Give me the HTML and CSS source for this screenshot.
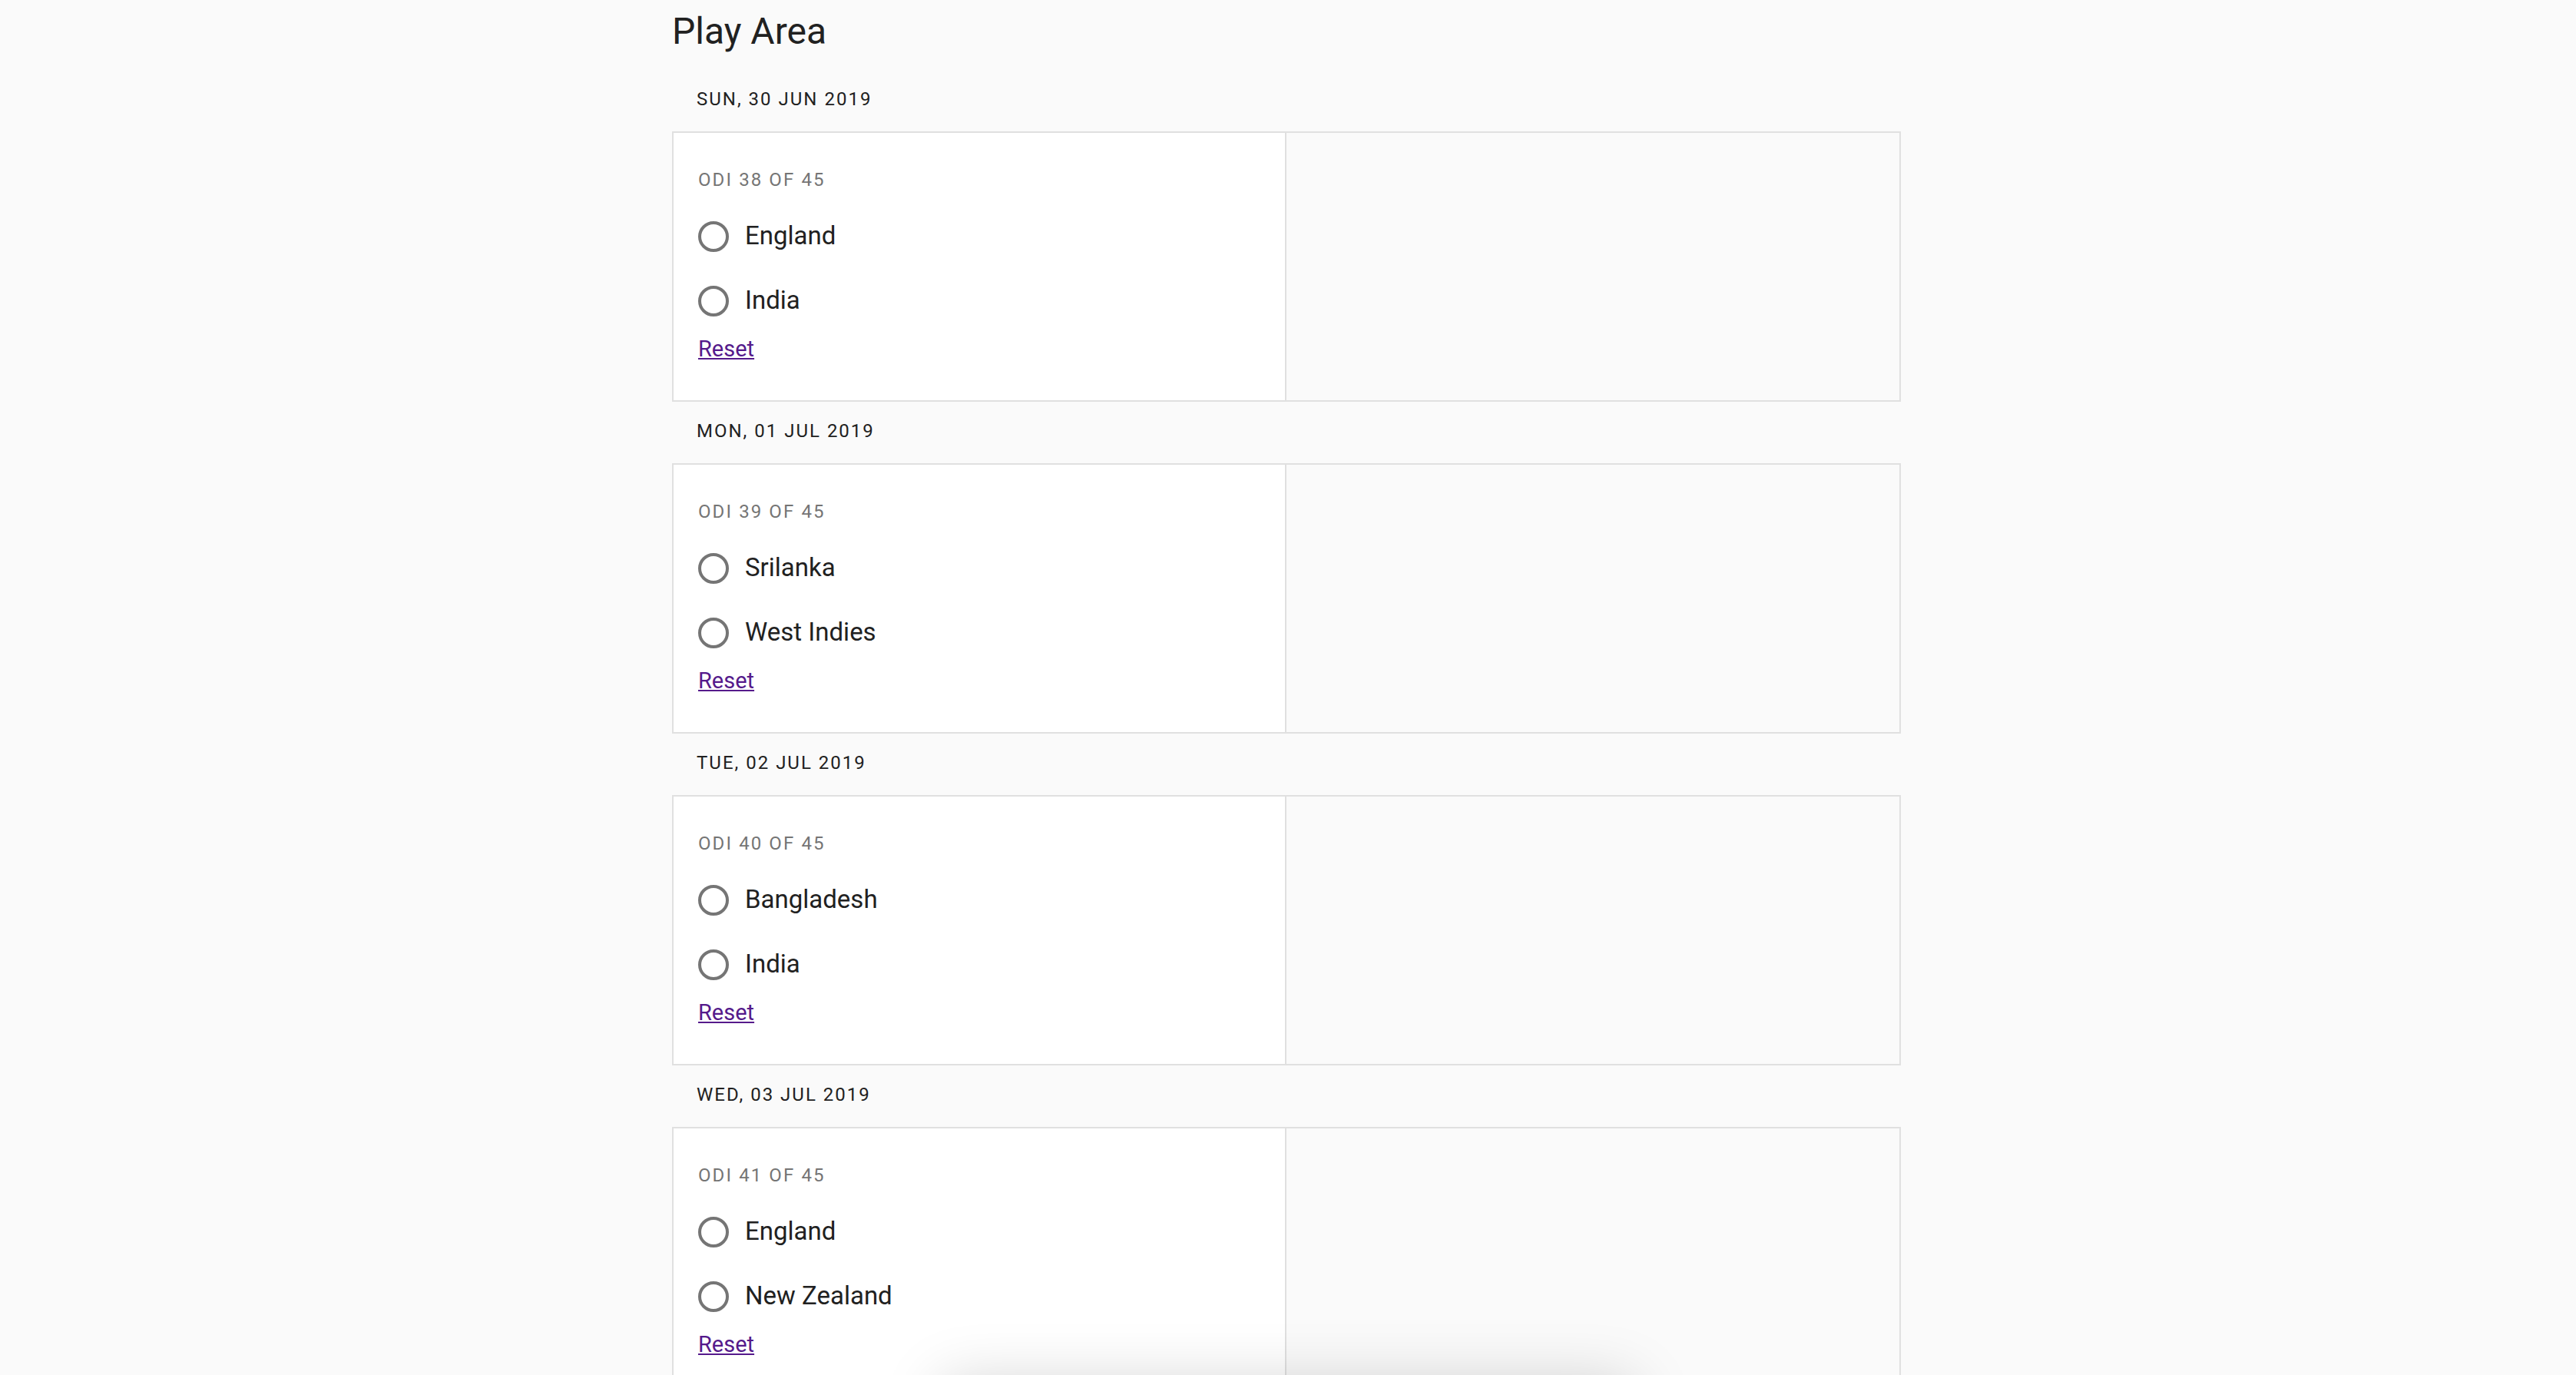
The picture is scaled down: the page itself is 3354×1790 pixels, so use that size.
FILE: index.html
```html
<!DOCTYPE html>
<html lang="en">
<head>
  <meta charset="UTF-8">
  <meta name="viewport" content="width=device-width, initial-scale=1.0">
  <title>Play Area</title>
  <link rel="stylesheet" href="styles.css">
</head>
<body>
  <main class="play">
    <h1 class="play-title">Play Area</h1>

    <!-- 30 Jun -->
    <section class="day">
      <div class="day-date">SUN, 30 JUN 2019</div>
      <div class="match">
        <div class="match-pick">
          <div class="match-no">ODI 38 OF 45</div>
          <label class="team"><input type="radio" name="odi38"><span>England</span></label>
          <label class="team"><input type="radio" name="odi38"><span>India</span></label>
          <a href="#" class="reset">Reset</a>
        </div>
        <div class="match-side"></div>
      </div>
    </section>

    <!-- 01 Jul -->
    <section class="day">
      <div class="day-date">MON, 01 JUL 2019</div>
      <div class="match">
        <div class="match-pick">
          <div class="match-no">ODI 39 OF 45</div>
          <label class="team"><input type="radio" name="odi39"><span>Srilanka</span></label>
          <label class="team"><input type="radio" name="odi39"><span>West Indies</span></label>
          <a href="#" class="reset">Reset</a>
        </div>
        <div class="match-side"></div>
      </div>
    </section>

    <!-- 02 Jul -->
    <section class="day">
      <div class="day-date">TUE, 02 JUL 2019</div>
      <div class="match">
        <div class="match-pick">
          <div class="match-no">ODI 40 OF 45</div>
          <label class="team"><input type="radio" name="odi40"><span>Bangladesh</span></label>
          <label class="team"><input type="radio" name="odi40"><span>India</span></label>
          <a href="#" class="reset">Reset</a>
        </div>
        <div class="match-side"></div>
      </div>
    </section>

    <!-- 03 Jul -->
    <section class="day">
      <div class="day-date">WED, 03 JUL 2019</div>
      <div class="match">
        <div class="match-pick">
          <div class="match-no">ODI 41 OF 45</div>
          <label class="team"><input type="radio" name="odi41"><span>England</span></label>
          <label class="team"><input type="radio" name="odi41"><span>New Zealand</span></label>
          <a href="#" class="reset">Reset</a>
        </div>
        <div class="match-side"></div>
      </div>
    </section>
  </main>

  <div class="bottom-sheet"></div>
</body>
</html>
```

FILE: styles.css
```css
body {
  margin: 0;
  background-color: #fafafa;
  font-family: Roboto, "Liberation Sans", Arial, sans-serif;
  color: rgba(0, 0, 0, 0.87);
}
.play {
  width: 1600px;
  margin-left: calc(50% - 802px);
}
.play-title {
  margin: 0;
  padding: 13px 0 22px;
  font-size: 48px;
  font-weight: 400;
  line-height: 56px;
  color: #212121;
}
.day-date {
  padding: 22px 32px 26px;
  font-size: 24px;
  line-height: 32px;
  letter-spacing: 2px;
  color: #212121;
}
.match {
  display: grid;
  grid-template-columns: 1fr 1fr;
  border: 2px solid #e0e0e0;
}
.match-pick {
  display: flex;
  flex-direction: column;
  align-items: flex-start;
  padding: 45px 32px 47px;
  background-color: #fff;
  border-right: 2px solid #e0e0e0;
}
.match-no {
  margin-bottom: 16px;
  font-size: 24px;
  line-height: 32px;
  letter-spacing: 2.1px;
  color: #757575;
}
.team {
  display: flex;
  align-items: center;
  gap: 21px;
  height: 84px;
  font-size: 33px;
  color: #212121;
  cursor: pointer;
}
.team span {
  padding-bottom: 3px;
}
.team input {
  appearance: none;
  -webkit-appearance: none;
  width: 40px;
  height: 40px;
  margin: 0;
  border: 4px solid #757575;
  border-radius: 50%;
  cursor: pointer;
}
.team input:checked {
  border-color: #673ab7;
  background: radial-gradient(circle, #673ab7 0 9px, transparent 10px);
}
.reset {
  font-size: 29px;
  line-height: 40px;
  color: #551a8b;
}

/* sheet sitting just below the viewport, only its shadow shows */
.bottom-sheet {
  position: fixed;
  left: 50%;
  bottom: -170px;
  width: 900px;
  height: 160px;
  transform: translateX(-50%);
  background: #fff;
  box-shadow: 0 0 80px rgba(0, 0, 0, 0.18);
}
```
